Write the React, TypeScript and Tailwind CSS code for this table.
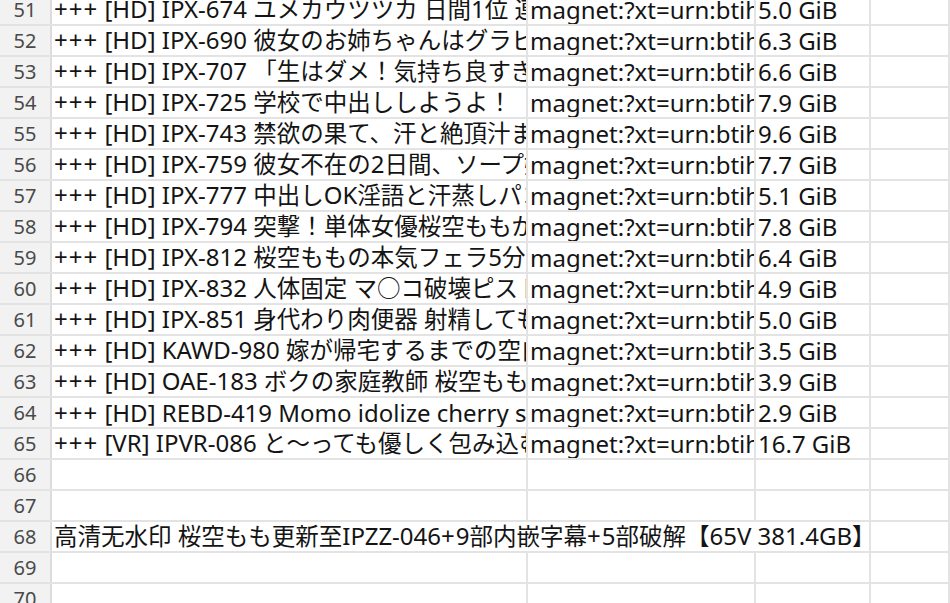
import React from "react";

const rows: [number, string, string, string][] = [
  [51, "+++ [HD] IPX-674 ユメカウツツカ 日間1位 連続", "magnet:?xt=urn:btih:", "5.0 GiB"],
  [52, "+++ [HD] IPX-690 彼女のお姉ちゃんはグラビアアイドル", "magnet:?xt=urn:btih:", "6.3 GiB"],
  [53, "+++ [HD] IPX-707 「生はダメ！気持ち良すぎる", "magnet:?xt=urn:btih:", "6.6 GiB"],
  [54, "+++ [HD] IPX-725 学校で中出ししようよ！（", "magnet:?xt=urn:btih:", "7.9 GiB"],
  [55, "+++ [HD] IPX-743 禁欲の果て、汗と絶頂汁まみれ", "magnet:?xt=urn:btih:", "9.6 GiB"],
  [56, "+++ [HD] IPX-759 彼女不在の2日間、ソープ嬢", "magnet:?xt=urn:btih:", "7.7 GiB"],
  [57, "+++ [HD] IPX-777 中出しOK淫語と汗蒸しパコ", "magnet:?xt=urn:btih:", "5.1 GiB"],
  [58, "+++ [HD] IPX-794 突撃！単体女優桜空ももが", "magnet:?xt=urn:btih:", "7.8 GiB"],
  [59, "+++ [HD] IPX-812 桜空ももの本気フェラ5分", "magnet:?xt=urn:btih:", "6.4 GiB"],
  [60, "+++ [HD] IPX-832 人体固定 マ○コ破壊ピストン", "magnet:?xt=urn:btih:", "4.9 GiB"],
  [61, "+++ [HD] IPX-851 身代わり肉便器 射精しても", "magnet:?xt=urn:btih:", "5.0 GiB"],
  [62, "+++ [HD] KAWD-980 嫁が帰宅するまでの空白", "magnet:?xt=urn:btih:", "3.5 GiB"],
  [63, "+++ [HD] OAE-183 ボクの家庭教師 桜空もも", "magnet:?xt=urn:btih:", "3.9 GiB"],
  [64, "+++ [HD] REBD-419 Momo idolize cherry sky", "magnet:?xt=urn:btih:", "2.9 GiB"],
  [65, "+++ [VR] IPVR-086 と〜っても優しく包み込む", "magnet:?xt=urn:btih:", "16.7 GiB"],
];

const font = { fontFamily: '"Noto Sans", "Noto Sans CJK JP", "Noto Sans CJK SC", sans-serif' };

const CJK = /([\u2e80-\u2fff\u3000-\u30ff\u3400-\u9fff\uff00-\uffef\u25cb-\u25ef]+)/;
const PLUS = /(\++)/;

function Latin({ text }: { text: string }) {
  const parts = text.split(PLUS).filter((p) => p.length > 0);
  return (
    <>
      {parts.map((p, i) =>
        PLUS.test(p) ? (
          <span key={i} className="text-[24px] tracking-[1px]">
            {p}
          </span>
        ) : (
          <span key={i} className="text-[24px]">
            {p}
          </span>
        )
      )}
    </>
  );
}

function Mixed({ text }: { text: string }) {
  const parts = text.split(CJK).filter((p) => p.length > 0);
  return (
    <>
      {parts.map((p, i) =>
        CJK.test(p) ? (
          <span key={i} className="text-[23.5px]">
            {p}
          </span>
        ) : (
          <Latin key={i} text={p} />
        )
      )}
    </>
  );
}

function Header({ n }: { n: number }) {
  return (
    <div className="w-[52px] shrink-0 h-full bg-[#f2f2f2] border-r-2 border-[#dcdcdc] flex items-center justify-center text-[20px] text-[#4a4a4a]">
      {n}
    </div>
  );
}

function Cell({ w, text, grow }: { w?: string; text?: string; grow?: boolean }) {
  return (
    <div
      className={`${w ?? ""} ${grow ? "flex-1" : "shrink-0"} h-full border-r-2 border-[#e3e3e3] overflow-hidden whitespace-nowrap pl-[2px] flex items-center text-[#141414] leading-none`}
    >
      {text ? (
        <span className="whitespace-nowrap">
          <Mixed text={text} />
        </span>
      ) : null}
    </div>
  );
}

function Row({ children }: { children: React.ReactNode }) {
  return <div className="flex h-[31px] border-b-2 border-[#e3e3e3]">{children}</div>;
}

export default function App() {
  return (
    <div className="w-[950px] h-[603px] overflow-hidden bg-white" style={font}>
      <div className="-mt-[5px]">
        {rows.map(([n, a, b, c]) => (
          <Row key={n}>
            <Header n={n} />
            <Cell w="w-[476px]" text={a} />
            <Cell w="w-[228px]" text={b} />
            <Cell w="w-[115px]" text={c} />
            <Cell grow />
          </Row>
        ))}
        {[66, 67].map((n) => (
          <Row key={n}>
            <Header n={n} />
            <Cell w="w-[476px]" />
            <Cell w="w-[228px]" />
            <Cell w="w-[115px]" />
            <Cell grow />
          </Row>
        ))}
        <Row>
          <Header n={68} />
          <Cell w="w-[819px]" text="高清无水印 桜空もも更新至IPZZ-046+9部内嵌字幕+5部破解【65V 381.4GB】" />
          <Cell grow />
        </Row>
        {[69, 70, 71].map((n) => (
          <Row key={n}>
            <Header n={n} />
            <Cell w="w-[476px]" />
            <Cell w="w-[228px]" />
            <Cell w="w-[115px]" />
            <Cell grow />
          </Row>
        ))}
      </div>
    </div>
  );
}
